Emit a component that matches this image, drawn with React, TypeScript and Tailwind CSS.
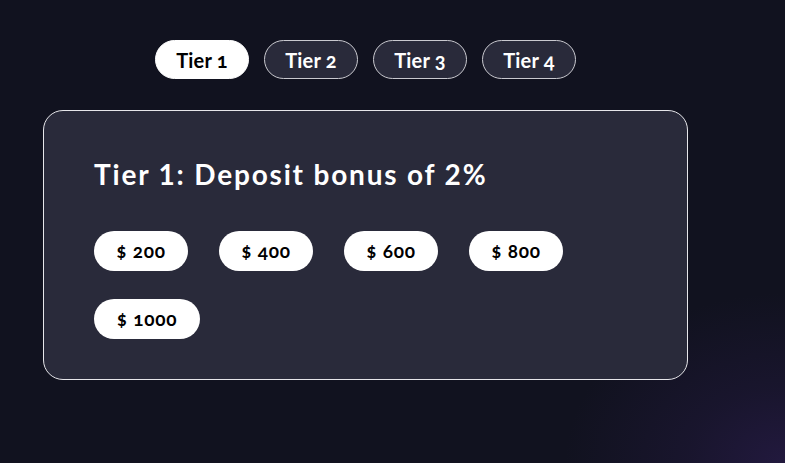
import { useState } from 'react';

const tiers = [
    { id: 1, bonus: '2%' },
    { id: 2, bonus: '3%' },
    { id: 3, bonus: '4%' },
    { id: 4, bonus: '5%' },
];

const amounts = ['200', '400', '600', '800', '1000'];

const App = () => {
    const [active, setActive] = useState(1);
    const tier = tiers.find((t) => t.id === active)!;

    return (
        <div
            className="min-h-screen w-full text-white"
            style={{
                fontFamily: 'Lato, "Noto Sans", sans-serif',
                background:
                    'radial-gradient(ellipse 220px 170px at 100% 100%, #22193e 0%, rgba(34,25,62,0.45) 45%, rgba(17,18,34,0) 100%), #11121f',
            }}
        >
            <div className="w-[645px] ml-[43px] pt-[40px]">
                {/* Tabs */}
                <div className="flex justify-center gap-[15px]">
                    {tiers.map((t) => (
                        <button
                            key={t.id}
                            onClick={() => setActive(t.id)}
                            className={`w-[94px] h-[39px] rounded-full text-[20px] font-bold oldstyle-nums tracking-[0.01em] border ${
                                active === t.id
                                    ? 'bg-white text-black border-white'
                                    : 'bg-[#292a3a] text-white border-[#c9c9cf]'
                            }`}
                        >
                            Tier {t.id}
                        </button>
                    ))}
                </div>

                {/* Card */}
                <div className="mt-[31px] rounded-[20px] border border-[#e6e6ea] bg-[#292a3a] pl-[50px] pr-[40px] pt-[47px] pb-[40px]">
                    <h2 className="text-[28px] leading-[32px] font-bold tracking-[0.065em]">
                        Tier {tier.id}: Deposit bonus of {tier.bonus}
                    </h2>
                    <div className="mt-[41px] flex flex-wrap gap-x-[31px] gap-y-[28px]">
                        {amounts.map((a) => (
                            <div
                                key={a}
                                className={`h-[40px] rounded-full bg-white text-black text-[19px] font-bold oldstyle-nums tracking-[0.04em] flex items-center justify-center ${
                                    a === '1000' ? 'w-[106px]' : 'w-[94px]'
                                }`}
                            >
                                $ {a}
                            </div>
                        ))}
                    </div>
                </div>
            </div>
        </div>
    );
};

export default App;
